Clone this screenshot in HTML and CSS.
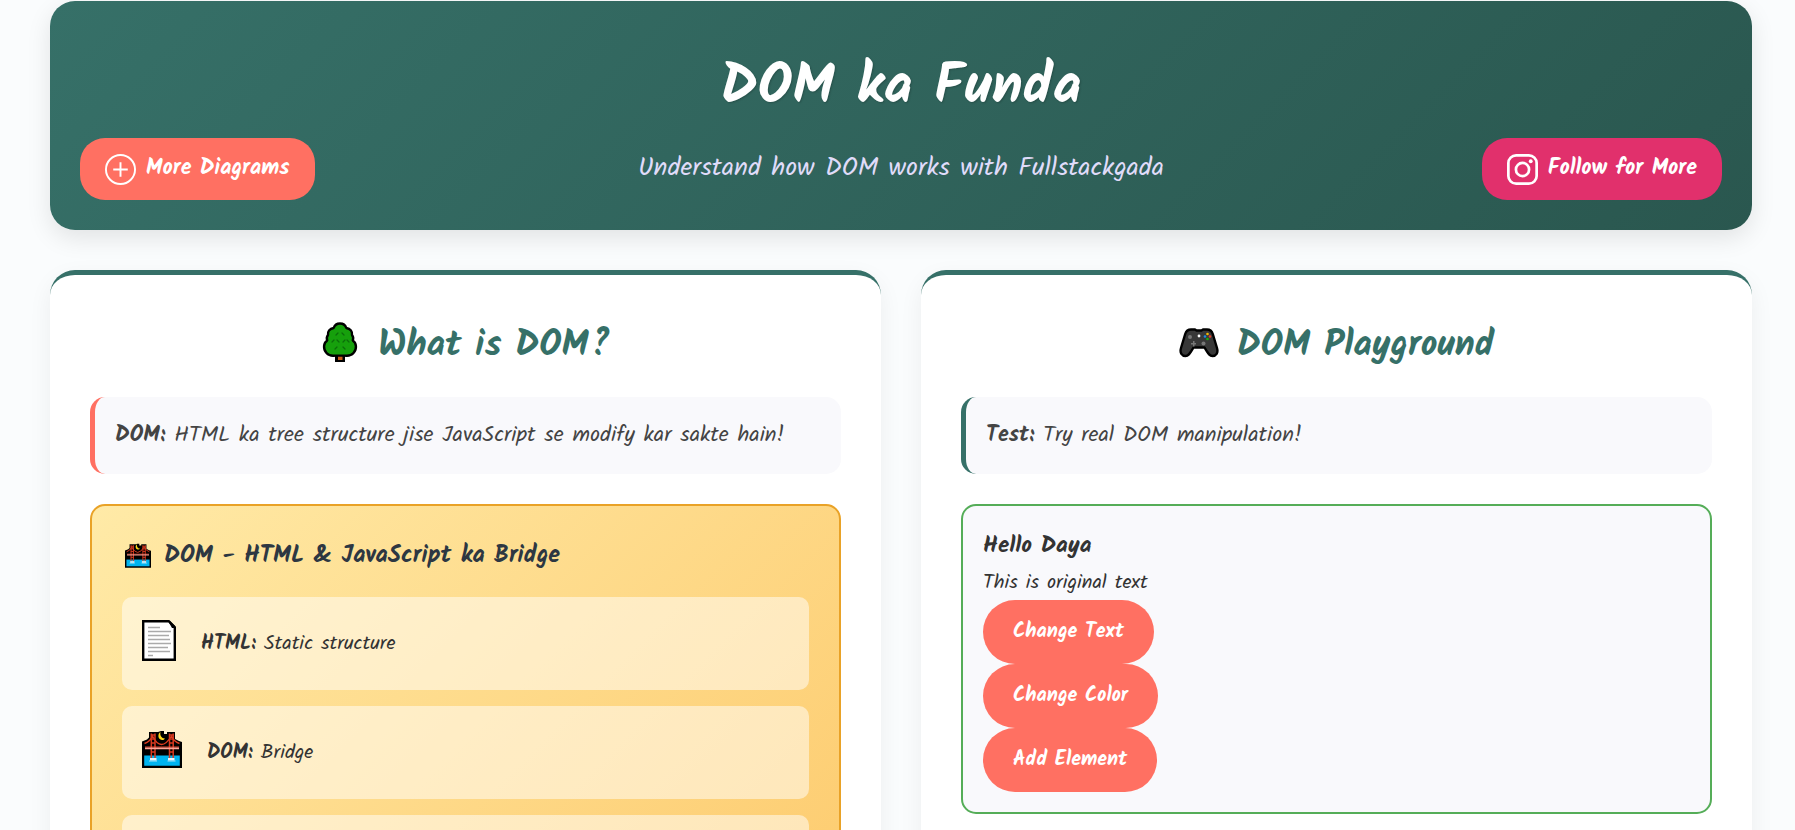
FILE: index.html
```html
<!DOCTYPE html>
<html lang="en">
<head>
<meta charset="utf-8">
<meta name="viewport" content="width=device-width, initial-scale=1">
<title>DOM ka Funda</title>
<link rel="stylesheet" href="styles.css">
</head>
<body>
<svg class="sprite" aria-hidden="true">
  <symbol id="bridge" viewBox="0 0 40 40">
    <path fill="#000" d="M0 38V11.500l5-2 2-2V2h9l3-1h3v3h3V2h8v7l4 2 3 1v26z"/>
    <path fill="#00b4f0" d="M2.200 25.500h35.600v10.300H2.200z"/>
    <path fill="none" stroke="#e03c20" stroke-width="1.400" d="M2.500 13.500Q8 12 10.500 6q8.500 17 19 0 2.500 6 8 7.500"/>
    <path fill="none" stroke="#d8391f" stroke-width="1.500" d="M9.300 3.500v25M13 3.500v25M27.500 3.500v25M31.200 3.500v25M9 5h4M9 9h4M9 13h4M27.500 5h4M27.500 9h4M27.500 13h4M9 22h4M27.500 22h4"/>
    <path fill="#e8402a" d="M3 16.500h34v1H3z"/>
    <path fill="#ffa294" d="M3 17.500h34v1.700H3z"/>
    <path fill="#eef6fa" d="M8 28h6.500v2.500H8zM26 28h6.500v2.500H26z"/>
    <path fill="#a8e0f5" d="M7 30.500h8v1H7zM25.500 30.500h8v1h-8z"/>
    <path fill="#ffd91a" d="M18.500 2c-3 1.500-3 7.500 1.500 8 1.500.2 2.500-.500 3-1.500-3 .3-5.500-3-4.500-6.500z"/>
  </symbol>
</svg>
<main class="page">
  <header class="hero">
    <h1 class="hero-title">DOM ka Funda</h1>
    <p class="hero-subtitle">Understand how DOM works with Fullstackgada</p>
    <a class="pill pill-more" href="#diagrams">
      <svg class="pill-icon" viewBox="0 0 32 32" aria-hidden="true" fill="none" stroke="currentColor" stroke-width="2"><circle cx="16" cy="16" r="15"/><path d="M16 8.500v15M8.500 16h15"/></svg>
      More Diagrams
    </a>
    <a class="pill pill-follow" href="#follow">
      <svg class="pill-icon" viewBox="0 0 32 32" aria-hidden="true" fill="none" stroke="currentColor" stroke-width="2.800"><rect x="1.400" y="1.400" width="29.200" height="29.200" rx="8"/><circle cx="16" cy="16" r="6.800"/><circle cx="24.500" cy="7.500" r="2" fill="currentColor" stroke="none"/></svg>
      Follow for More
    </a>
  </header>

  <div class="columns">
    <section class="card">
      <h2 class="card-title">
        <svg class="title-icon" viewBox="0 0 40 40" aria-hidden="true">
          <path fill="#000" d="M15 29h10v11H15z"/>
          <path fill="#c55a1a" d="M18 32h4.500v6H18z"/>
          <path fill="#16a00c" stroke="#000" stroke-width="2.400" stroke-linejoin="round" d="M20 1.500c-3.500 0-5.500 2-6.300 4.500C9.500 6.500 7.500 9.500 8 13c-1.500 1.800-1.500 3.500-.800 5.500C3.500 21 2.800 27 6.500 31c2.500 2.700 6 3 8.500 2.600h10c2.500.4 6 .1 8.500-2.600 3.700-4 3-10-.700-12.500.700-2 .7-3.700-.800-5.500.5-3.500-1.500-6.500-5.700-7C25.500 3.500 23.500 1.500 20 1.500z"/>
          <path fill="none" stroke="#0b6d0a" stroke-width="1.200" stroke-linecap="round" d="M16 13l2-2M22 11l2 2M12 20l2-2M17 18l2 2M23 20l2-2M27 18l2 2M15 27l2-2M23 25l2 2"/>
        </svg>
        What is DOM?
      </h2>
      <p class="note note-coral"><strong>DOM:</strong> HTML ka tree structure jise JavaScript se modify kar sakte hain!</p>
      <div class="bridge">
        <h3 class="bridge-title"><svg class="heading-icon" aria-hidden="true"><use href="#bridge"/></svg>DOM - HTML &amp; JavaScript ka Bridge</h3>
        <ul class="steps">
          <li class="step">
            <svg class="step-icon step-icon-page" viewBox="0 0 34 41" aria-hidden="true">
              <path fill="#fff" stroke="#000" stroke-width="2.400" d="M1.200 1.200h25.600l6 6v32.600H1.200z"/>
              <path fill="#000" d="M26 1h2l5 5v2h-3z"/>
              <path stroke="#aaa" stroke-width="1.300" d="M6 7.500h12M6 11.500h23M6 15.500h21M6 19.500h22M6 23.500h23M6 27.500h20M6 31.500h22M6 35.500h5"/>
            </svg>
            <span><strong>HTML:</strong> Static structure</span>
          </li>
          <li class="step">
            <svg class="step-icon" aria-hidden="true"><use href="#bridge"/></svg>
            <span><strong>DOM:</strong> Bridge</span>
          </li>
          <li class="step"></li>
        </ul>
      </div>
    </section>

    <section class="card">
      <h2 class="card-title">
        <svg class="title-icon" viewBox="0 0 40 40" aria-hidden="true">
          <path fill="#383838" stroke="#000" stroke-width="2.400" stroke-linejoin="round" d="M12 7.500h4l1.500 1h5l1.500-1h4c3 0 5 2 5.800 4.500L38 26c1.500 5-1 8-4.500 8-2.500 0-4-1.500-8-8.500h-11c-4 7-5.500 8.500-8 8.500C3 34 .5 31 2 26l4.200-14C7 9.500 9 7.500 12 7.500z"/>
          <g fill="#777"><circle cx="11" cy="15" r="2"/><circle cx="24.500" cy="21.500" r="2"/><path d="M14 19h1.500v2H17v1.500h-1.500v2H14v-2h-2V21h2z"/></g>
          <circle cx="20" cy="14" r="1.400" fill="#fff"/>
          <circle cx="28.500" cy="12" r="1.300" fill="#f5b800"/><circle cx="31" cy="14.500" r="1.300" fill="#e8402a"/><circle cx="26" cy="14.500" r="1.300" fill="#1a8fe0"/><circle cx="28.500" cy="17" r="1.300" fill="#16b00c"/>
        </svg>
        DOM Playground
      </h2>
      <p class="note note-teal"><strong>Test:</strong> Try real DOM manipulation!</p>
      <div class="demo">
        <h3 class="demo-title">Hello Daya</h3>
        <p class="demo-text">This is original text</p>
        <button class="action" type="button">Change Text</button>
        <button class="action" type="button">Change Color</button>
        <button class="action" type="button">Add Element</button>
      </div>
    </section>
  </div>
</main>
</body>
</html>
```
FILE: styles.css
```css
* {
  box-sizing: border-box;
  margin: 0;
  padding: 0;
}

body {
  font-family: Kalam, Lato, "Open Sans", sans-serif;
  font-size: 20px;
  line-height: 32px;
  color: #333;
  background: #fafcfd;
}

.sprite {
  position: absolute;
  width: 0;
  height: 0;
}

.page {
  padding: 1px 43px 40px 50px;
}

.hero {
  position: relative;
  padding: 42px 30px;
  border-radius: 25px;
  text-align: center;
  color: #fff;
  background: linear-gradient(135deg, #367068, #2a574f);
  box-shadow: 0 8px 25px rgba(0, 0, 0, 0.1);
}

.hero-title {
  margin-bottom: 15px;
  font-size: 56px;
  line-height: 90px;
  text-shadow: 1px 1px 2px rgba(0, 0, 0, 0.2);
}

.hero-subtitle {
  font-size: 26px;
  line-height: 40px;
  color: #e0dcfa;
}

.pill {
  position: absolute;
  bottom: 30px;
  display: flex;
  align-items: center;
  gap: 10px;
  padding: 15px 25px;
  border-radius: 25px;
  font-size: 22px;
  font-weight: 700;
  color: #fff;
  text-decoration: none;
}

.pill-more {
  left: 30px;
  background: #ff7062;
}

.pill-follow {
  right: 30px;
  background: #e1306c;
}

.pill-icon {
  width: 31px;
  height: 31px;
}

.columns {
  display: grid;
  grid-template-columns: 1fr 1fr;
  gap: 40px;
  margin-top: 40px;
}

.card {
  padding: 40px;
  border-top: 5px solid #367068;
  border-radius: 25px;
  background: #fff;
  box-shadow: 0 8px 25px rgba(0, 0, 0, 0.06);
}

.card-title {
  display: flex;
  align-items: center;
  justify-content: center;
  gap: 18px;
  margin-bottom: 20px;
  font-size: 36px;
  line-height: 62px;
  color: #367068;
}

.title-icon {
  width: 40px;
  height: 40px;
  margin-bottom: 8px;
}

.note {
  margin-bottom: 30px;
  padding: 20px;
  border-left: 5px solid #367068;
  border-radius: 15px;
  font-size: 22px;
  line-height: 37px;
  color: #444;
  background: #f9f9fc;
}

.note-coral {
  border-left-color: #ff7062;
}

.bridge {
  padding: 30px;
  border: 2px solid #e9a227;
  border-radius: 15px;
  background: linear-gradient(135deg, #ffeaa7, #fdcb6e);
}

.bridge-title {
  display: flex;
  align-items: center;
  gap: 13px;
  margin-bottom: 21px;
  padding-left: 3px;
  font-size: 24px;
  line-height: 40px;
  color: #2d3742;
}

.heading-icon {
  width: 26px;
  height: 26px;
}

.steps {
  display: flex;
  flex-direction: column;
  gap: 16px;
  list-style: none;
}

.step {
  display: flex;
  align-items: center;
  gap: 25px;
  min-height: 93px;
  padding: 15px 20px;
  border-radius: 10px;
  background: rgba(255, 255, 255, 0.5);
}

.step-icon {
  width: 40px;
  height: 40px;
  margin-bottom: 6px;
}

.step-icon-page {
  width: 34px;
  height: 41px;
}

.demo {
  display: flex;
  flex-direction: column;
  align-items: flex-start;
  padding: 20px;
  border: 2px solid #55ad58;
  border-radius: 15px;
  background: #f9f9fc;
}

.demo-title {
  font-size: 23px;
  line-height: 40px;
}

.demo-text {
  line-height: 34px;
}

.action {
  padding: 15px 30px;
  border: 0;
  border-radius: 32px;
  font: inherit;
  font-weight: 700;
  line-height: 34px;
  color: #fff;
  background: #ff7062;
}
```
